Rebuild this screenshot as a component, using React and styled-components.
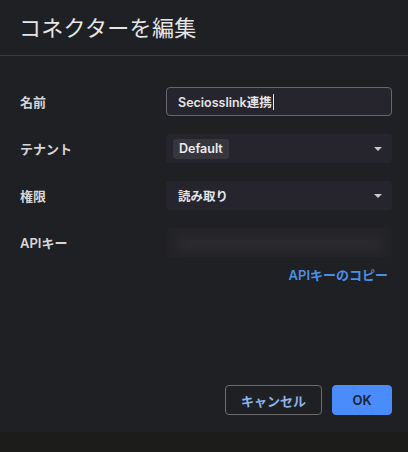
import React from 'react';
import styled, { createGlobalStyle } from 'styled-components';

const GlobalStyle = createGlobalStyle`
  html, body {
    margin: 0;
    padding: 0;
    background: #1d1e1b;
  }
  body {
    font-family: Inter, "Noto Sans CJK JP", "Noto Sans", sans-serif;
  }
`;

const Page = styled.div`
  width: 408px;
  height: 452px;
  display: flex;
  flex-direction: column;
  background: #1c1d1a;
`;

const Dialog = styled.div`
  height: 432px;
  display: flex;
  flex-direction: column;
  background: #1f2024;
`;

const Header = styled.div`
  height: 56px;
  display: flex;
  align-items: center;
  padding: 0 19px;
  border-bottom: 1px solid #3a3b3f;
  box-sizing: border-box;
`;

const Title = styled.h2`
  margin: 0;
  margin-top: -3px;
  font-size: 22px;
  font-weight: 400;
  color: #e6e6e6;
  letter-spacing: 0.3px;
`;

const Body = styled.div`
  flex: 1;
  padding: 31px 16px 0 20px;
  display: flex;
  flex-direction: column;
`;

const Rows = styled.div`
  display: grid;
  grid-template-columns: 146px 1fr;
  row-gap: 18px;
  align-items: center;
`;

const Label = styled.div`
  font-size: 13px;
  font-weight: 600;
  color: #d6d6d8;
`;

const Field = styled.div`
  height: 29px;
  box-sizing: border-box;
  border-radius: 4px;
  background: #26252d;
  border: 1px solid ${p => (p.outlined ? '#66666c' : 'transparent')};
  display: flex;
  align-items: center;
  padding: 0 6px 0 ${p => (p.chip ? 6 : 11)}px;
  font-size: 12.5px;
  font-weight: 600;
  color: #e4e4e6;
`;

const Caret = styled.span`
  width: 1px;
  height: 16px;
  background: #e4e4e6;
  margin-left: 1px;
`;

const Arrow = styled.span`
  margin-left: auto;
  margin-right: 3px;
  width: 0;
  height: 0;
  border-left: 4px solid transparent;
  border-right: 4px solid transparent;
  border-top: 4px solid #c8c8cc;
`;

const Chip = styled.span`
  background: #37363d;
  border-radius: 3px;
  padding: 2px 6px 3px;
  font-size: 12.5px;
  font-weight: 600;
  color: #ececee;
`;

const Masked = styled.div`
  height: 29px;
  border-radius: 4px;
  background: #232327;
  overflow: hidden;
  display: flex;
  align-items: center;
  justify-content: center;
`;

const Blur = styled.div`
  width: 90%;
  height: 14px;
  background: #2c2c30;
  filter: blur(6px);
`;

const CopyLink = styled.a`
  align-self: flex-end;
  margin-top: 8px;
  margin-right: 4px;
  font-size: 13px;
  font-weight: 600;
  color: #4a8fe4;
  text-decoration: none;
  cursor: pointer;
`;

const Footer = styled.div`
  margin-top: auto;
  padding-bottom: 17px;
  display: flex;
  justify-content: flex-end;
  gap: 10px;
`;

const Button = styled.button`
  height: 30px;
  box-sizing: border-box;
  border-radius: 4px;
  font-family: inherit;
  font-size: 13px;
  font-weight: 600;
  cursor: pointer;
  padding: 0;
  width: ${p => p.width}px;
  background: ${p => (p.primary ? '#4a8cfb' : 'transparent')};
  border: 1px solid ${p => (p.primary ? '#4a8cfb' : '#6b6b6e')};
  color: ${p => (p.primary ? '#1b2230' : '#8eb3e8')};
`;

export default function App() {
  return (
    <Page>
      <GlobalStyle />
      <Dialog>
        <Header>
          <Title>コネクターを編集</Title>
        </Header>
        <Body>
          <Rows>
            <Label>名前</Label>
            <Field outlined>
              Seciosslink連携<Caret />
            </Field>
            <Label>テナント</Label>
            <Field chip>
              <Chip>Default</Chip>
              <Arrow />
            </Field>
            <Label>権限</Label>
            <Field>
              読み取り
              <Arrow />
            </Field>
            <Label>APIキー</Label>
            <Masked>
              <Blur />
            </Masked>
          </Rows>
          <CopyLink>APIキーのコピー</CopyLink>
          <Footer>
            <Button width={97}>キャンセル</Button>
            <Button primary width={60}>OK</Button>
          </Footer>
        </Body>
      </Dialog>
    </Page>
  );
}
